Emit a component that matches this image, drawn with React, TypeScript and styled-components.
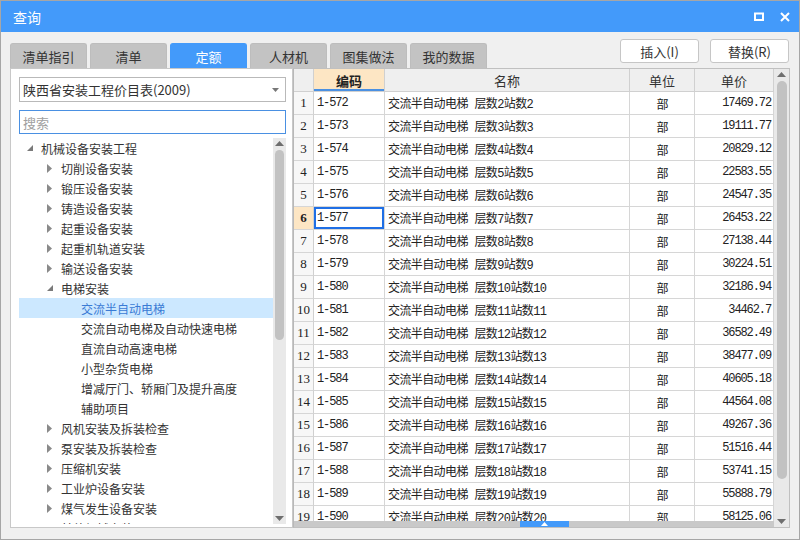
import React from "react";
import styled, { createGlobalStyle } from "styled-components";

const GlobalStyle = createGlobalStyle`
  html, body {
    margin: 0;
    padding: 0;
    background: #ffffff;
  }
  * {
    box-sizing: border-box;
  }
`;

const CJK = `"Noto Sans CJK SC", "Noto Sans", sans-serif`;
const MONO = `"Liberation Mono", "Noto Sans CJK SC", monospace`;

const Window = styled.div`
  position: relative;
  width: 800px;
  height: 540px;
  display: flex;
  flex-direction: column;
  border: 1px solid #a6a6a6;
  background: #f0f0f0;
  font-family: ${CJK};
  color: #333;
  overflow: hidden;
`;

const TitleBar = styled.div`
  height: 31px;
  flex: none;
  display: flex;
  align-items: center;
  justify-content: space-between;
  padding: 0 9px 0 12px;
  background: #439afa;
  color: #fff;
`;

const Title = styled.span`
  font-size: 14px;
  line-height: 1;
`;

const TitleIcons = styled.div`
  display: flex;
  align-items: center;
  gap: 16px;
`;

const Body = styled.div`
  flex: 1;
  display: flex;
  flex-direction: column;
  padding: 0 9px 11px 9px;
  min-height: 0;
`;

const TopRow = styled.div`
  height: 36px;
  flex: none;
  display: flex;
  justify-content: space-between;
`;

const Tabs = styled.div`
  display: flex;
  align-items: flex-end;
  gap: 3px;
`;

const Tab = styled.div<{ $active?: boolean }>`
  width: 77px;
  height: 25px;
  display: flex;
  align-items: center;
  justify-content: center;
  border-radius: 3px 3px 0 0;
  font-size: 13px;
  background: ${(p) => (p.$active ? "#439afa" : "#c3c3c3")};
  color: ${(p) => (p.$active ? "#fff" : "#333")};
  border: 1px solid ${(p) => (p.$active ? "#439afa" : "#bdbdbd")};
  border-bottom: none;
`;

const Buttons = styled.div`
  display: flex;
  gap: 11px;
  padding-top: 7px;
  padding-right: 1px;
`;

const Button = styled.button`
  width: 79px;
  height: 24px;
  background: #fff;
  border: 1px solid #c6c6c6;
  border-radius: 3px;
  font-family: ${CJK};
  font-size: 13px;
  color: #333;
  padding: 0;
`;

const Main = styled.div`
  flex: 1;
  display: flex;
  min-height: 0;
`;

const LeftPanel = styled.div`
  width: 283px;
  flex: none;
  display: flex;
  flex-direction: column;
  background: #fff;
  border: 1px solid #c8c8c8;
  padding: 8px 6px 3px 8px;
`;

const Select = styled.div`
  height: 25px;
  flex: none;
  display: flex;
  align-items: center;
  justify-content: space-between;
  border: 1px solid #b9b9b9;
  padding: 0 6px 0 3px;
  font-size: 13px;
  color: #333;
`;

const Search = styled.div`
  height: 24px;
  flex: none;
  margin-top: 8px;
  display: flex;
  align-items: center;
  border: 1px solid #4a90e2;
  padding: 0 3px;
  font-size: 13px;
  color: #a0a0a0;
`;

const TreeWrap = styled.div`
  flex: 1;
  display: flex;
  margin-top: 4px;
  min-height: 0;
`;

const TreeList = styled.div`
  flex: 1;
  overflow: hidden;
`;

const TreeRow = styled.div<{ $level: number; $selected?: boolean }>`
  height: 20px;
  display: flex;
  align-items: center;
  padding-left: ${(p) => 6 + p.$level * 20}px;
  font-size: 12px;
  white-space: nowrap;
  background: ${(p) => (p.$selected ? "#cce8ff" : "transparent")};
  color: ${(p) => (p.$selected ? "#3a7bd5" : "#333")};
`;

const Arrow = styled.span`
  width: 16px;
  flex: none;
  display: flex;
  align-items: center;
  padding-left: 2px;
`;

const ScrollTrack = styled.div<{ $width: number }>`
  width: ${(p) => p.$width}px;
  flex: none;
  display: flex;
  flex-direction: column;
  align-items: center;
  background: #e9e9e9;
  padding: 3px 0;
`;

const Thumb = styled.div<{ $width: number; $height: number }>`
  width: ${(p) => p.$width}px;
  height: ${(p) => p.$height}px;
  border-radius: ${(p) => p.$width / 2}px;
  background: #c2c2c2;
  margin-top: 4px;
`;

const Spacer = styled.div`
  flex: 1;
`;

const GridPanel = styled.div`
  flex: 1;
  display: flex;
  border: 1px solid #c0c0c0;
  border-left: 1px solid #b8b8b8;
  background: #fff;
  min-width: 0;
`;

const TableArea = styled.div`
  flex: 1;
  display: flex;
  flex-direction: column;
  min-width: 0;
`;

const COLS = "20px 71px 245px 65px 79px";

const HeaderRow = styled.div`
  display: grid;
  grid-template-columns: ${COLS};
  height: 23px;
  flex: none;
  background: #efefef;
  border-bottom: 1px solid #d0d0d0;
`;

const HeadCell = styled.div<{ $active?: boolean }>`
  display: flex;
  align-items: center;
  justify-content: center;
  font-size: 13px;
  font-weight: ${(p) => (p.$active ? 700 : 400)};
  color: ${(p) => (p.$active ? "#222" : "#333")};
  background: ${(p) => (p.$active ? "#fde6c4" : "transparent")};
  border-right: 1px solid #d0d0d0;
  box-shadow: ${(p) => (p.$active ? "inset 0 -2px 0 #4a90e2" : "none")};
`;

const Rows = styled.div`
  flex: 1;
  overflow: hidden;
`;

const Row = styled.div`
  display: grid;
  grid-template-columns: ${COLS};
  height: 23px;
`;

const Cell = styled.div<{ $align?: "left" | "center" | "right"; $mono?: boolean }>`
  display: flex;
  align-items: center;
  justify-content: ${(p) =>
    p.$align === "center" ? "center" : p.$align === "right" ? "flex-end" : "flex-start"};
  padding: 0 2px 0 3px;
  border-right: 1px solid #d6d6d6;
  border-bottom: 1px solid #d6d6d6;
  font-size: 12px;
  font-family: ${(p) => (p.$mono ? MONO : CJK)};
  letter-spacing: ${(p) => (p.$mono ? "-1.1px" : "0")};
  color: #222;
  white-space: nowrap;
  overflow: hidden;
`;

const NameCell = styled(Cell)`
  font-family: "Liberation Mono", "Noto Sans CJK SC", monospace;
  letter-spacing: -0.6px;
`;

const NumCell = styled.div<{ $current?: boolean }>`
  display: flex;
  align-items: center;
  justify-content: center;
  border-right: 1px solid #d0d0d0;
  border-bottom: 1px solid #d6d6d6;
  font-family: "Liberation Serif", serif;
  font-size: 13px;
  font-weight: ${(p) => (p.$current ? 700 : 400)};
  background: ${(p) => (p.$current ? "#fde6c4" : "#f7f7f7")};
  color: #222;
`;

const CodeCell = styled(Cell)<{ $focused?: boolean }>`
  box-shadow: ${(p) => (p.$focused ? "inset 0 0 0 2px #1f6fe5" : "none")};
`;

const HScroll = styled.div`
  height: 6px;
  flex: none;
  background: #c9c9c9;
  display: flex;
  justify-content: center;
  padding-left: 20px;
`;

const HThumb = styled.div`
  width: 49px;
  height: 6px;
  background: #439afa;
  display: flex;
  align-items: center;
  justify-content: center;
`;

const Grip = styled.div`
  position: absolute;
  right: 2px;
  bottom: 2px;
  width: 9px;
  height: 9px;
`;

const treeItems: { level: number; text: string; open?: boolean; leaf?: boolean; selected?: boolean }[] = [
  { level: 0, text: "机械设备安装工程", open: true },
  { level: 1, text: "切削设备安装" },
  { level: 1, text: "锻压设备安装" },
  { level: 1, text: "铸造设备安装" },
  { level: 1, text: "起重设备安装" },
  { level: 1, text: "起重机轨道安装" },
  { level: 1, text: "输送设备安装" },
  { level: 1, text: "电梯安装", open: true },
  { level: 2, text: "交流半自动电梯", leaf: true, selected: true },
  { level: 2, text: "交流自动电梯及自动快速电梯", leaf: true },
  { level: 2, text: "直流自动高速电梯", leaf: true },
  { level: 2, text: "小型杂货电梯", leaf: true },
  { level: 2, text: "增减厅门、轿厢门及提升高度", leaf: true },
  { level: 2, text: "辅助项目", leaf: true },
  { level: 1, text: "风机安装及拆装检查" },
  { level: 1, text: "泵安装及拆装检查" },
  { level: 1, text: "压缩机安装" },
  { level: 1, text: "工业炉设备安装" },
  { level: 1, text: "煤气发生设备安装" },
  { level: 1, text: "其他机械安装" },
];

const prices = [
  "17469.72", "19111.77", "20829.12", "22583.55", "24547.35", "26453.22",
  "27138.44", "30224.51", "32186.94", "34462.7", "36582.49", "38477.09",
  "40605.18", "44564.08", "49267.36", "51516.44", "53741.15", "55888.79",
  "58125.06",
];

const rows = prices.map((price, i) => ({
  no: i + 1,
  code: `1-${572 + i}`,
  name: `交流半自动电梯 层数${i + 2}站数${i + 2}`,
  unit: "部",
  price,
}));

const tabs = ["清单指引", "清单", "定额", "人材机", "图集做法", "我的数据"];

const Caret = ({ dir }: { dir: "up" | "down" }) => (
  <svg width="9" height="5" viewBox="0 0 9 5">
    {dir === "up" ? (
      <path d="M0 5 L4.5 0 L9 5 Z" fill="#6e6e6e" />
    ) : (
      <path d="M0 0 L4.5 5 L9 0 Z" fill="#6e6e6e" />
    )}
  </svg>
);

const TreeArrow = ({ open }: { open?: boolean }) =>
  open ? (
    <svg width="6" height="6" viewBox="0 0 6 6">
      <path d="M6 0 L6 6 L0 6 Z" fill="#7a7a7a" />
    </svg>
  ) : (
    <svg width="5" height="9" viewBox="0 0 5 9">
      <path d="M0 0 L5 4.5 L0 9 Z" fill="#8a8a8a" />
    </svg>
  );

const App: React.FC = () => {
  return (
    <>
      <GlobalStyle />
      <Window>
        <TitleBar>
          <Title>查询</Title>
          <TitleIcons>
            <svg width="10" height="9" viewBox="0 0 10 9">
              <rect x="1" y="1.5" width="8" height="6.5" fill="none" stroke="#fff" strokeWidth="2" />
            </svg>
            <svg width="10" height="10" viewBox="0 0 10 10">
              <path d="M1 1 L9 9 M9 1 L1 9" stroke="#fff" strokeWidth="2" />
            </svg>
          </TitleIcons>
        </TitleBar>
        <Body>
          <TopRow>
            <Tabs>
              {tabs.map((t) => (
                <Tab key={t} $active={t === "定额"}>
                  {t}
                </Tab>
              ))}
            </Tabs>
            <Buttons>
              <Button>插入(I)</Button>
              <Button>替换(R)</Button>
            </Buttons>
          </TopRow>
          <Main>
            <LeftPanel>
              <Select>
                <span>陕西省安装工程价目表(2009)</span>
                <svg width="7" height="4" viewBox="0 0 7 4">
                  <path d="M0 0 L3.5 4 L7 0 Z" fill="#777" />
                </svg>
              </Select>
              <Search>搜索</Search>
              <TreeWrap>
                <TreeList>
                  {treeItems.map((item) => (
                    <TreeRow key={item.text} $level={item.level} $selected={item.selected}>
                      <Arrow>{!item.leaf && <TreeArrow open={item.open} />}</Arrow>
                      {item.text}
                    </TreeRow>
                  ))}
                </TreeList>
                <ScrollTrack $width={13}>
                  <Caret dir="up" />
                  <Thumb $width={9} $height={190} />
                  <Spacer />
                  <Caret dir="down" />
                </ScrollTrack>
              </TreeWrap>
            </LeftPanel>
            <GridPanel>
              <TableArea>
                <HeaderRow>
                  <HeadCell />
                  <HeadCell $active>编码</HeadCell>
                  <HeadCell>名称</HeadCell>
                  <HeadCell>单位</HeadCell>
                  <HeadCell>单价</HeadCell>
                </HeaderRow>
                <Rows>
                  {rows.map((r) => (
                    <Row key={r.no}>
                      <NumCell $current={r.no === 6}>{r.no}</NumCell>
                      <CodeCell $mono $focused={r.no === 6}>
                        {r.code}
                      </CodeCell>
                      <NameCell>{r.name}</NameCell>
                      <Cell $align="center">{r.unit}</Cell>
                      <Cell $align="right" $mono>
                        {r.price}
                      </Cell>
                    </Row>
                  ))}
                </Rows>
                <HScroll>
                  <HThumb>
                    <svg width="7" height="4" viewBox="0 0 7 4">
                      <path d="M0 4 L3.5 0 L7 4 Z" fill="#fff" />
                    </svg>
                  </HThumb>
                </HScroll>
              </TableArea>
              <ScrollTrack $width={15}>
                <Caret dir="up" />
                <Thumb $width={10} $height={398} />
                <Spacer />
                <Caret dir="down" />
              </ScrollTrack>
            </GridPanel>
          </Main>
        </Body>
        <Grip>
          <svg width="9" height="9" viewBox="0 0 9 9">
            {[
              [7, 1],
              [4, 4],
              [7, 4],
              [1, 7],
              [4, 7],
              [7, 7],
            ].map(([x, y]) => (
              <rect key={`${x}-${y}`} x={x} y={y} width="1.5" height="1.5" fill="#999" />
            ))}
          </svg>
        </Grip>
      </Window>
    </>
  );
};

export default App;
